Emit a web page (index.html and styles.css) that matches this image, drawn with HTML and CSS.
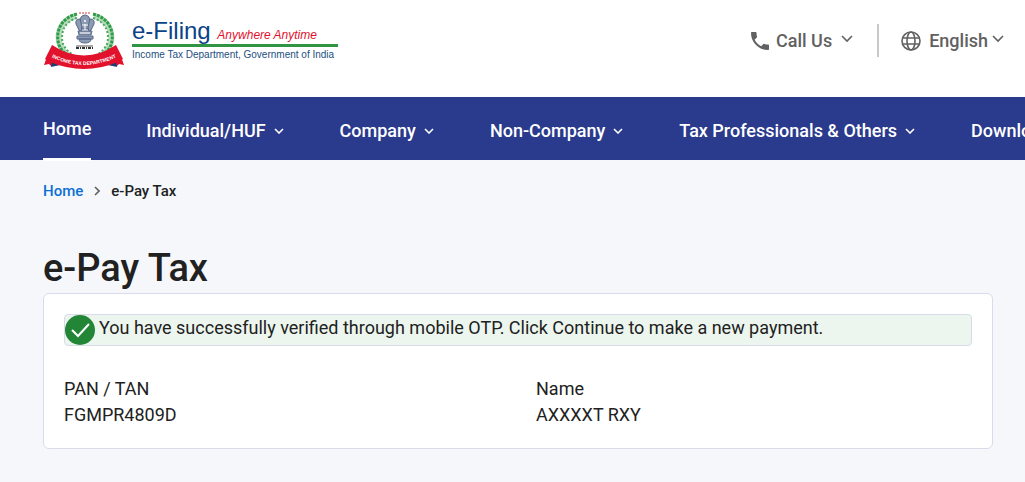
FILE: index.html
```html
<!DOCTYPE html>
<html lang="en">
<head>
    <meta charset="UTF-8">
    <meta name="viewport" content="width=device-width, initial-scale=1.0">
    <title>e-Pay Tax</title>
    <link rel="stylesheet" href="styles.css">
</head>
<body>
    <header class="top">
        <a class="brand" href="#">
            <svg class="emblem" width="82" height="58" viewBox="0 0 82 58" aria-hidden="true">
                <!-- wreath -->
                <path d="M33 4C18 8 13 21 17 33c2 5 6 9 11 12M51 4c15 4 20 17 16 29-2 5-6 9-11 12" fill="none" stroke="#b5dcbb" stroke-width="6"/>
                <path d="M34 2C17 6 12 21 16 33c2 5 6 9 11 12M50 2c17 4 22 19 18 31-2 5-6 9-11 12" fill="none" stroke="#2f9a48" stroke-width="3" stroke-dasharray="3 1"/>
                <path d="M34 6C21 10 17 21 20 32c2 4 5 8 9 10M50 6c13 4 17 15 14 26-2 4-5 8-9 10" fill="none" stroke="#4aa85e" stroke-width="2" stroke-dasharray="2 2"/>
                <path d="M36 1h12" stroke="#d8363c" stroke-width="1" stroke-dasharray="2 1"/>
                <!-- lion capital -->
                <g fill="#8d9bb2" stroke="#56698a" stroke-width="1">
                    <path d="M38 5q4-4 8 0l1 5-2 7h-6l-2-7z"/>
                    <path d="M37 7q-5 0-4 5l3 6 2 2 1-5zM47 7q5 0 4 5l-3 6-2 2-1-5z"/>
                    <path d="M35 19h14l-1 4H36zM34 24h16v3H34zM36 27h12q0 4-6 4t-6-4z"/>
                </g>
                <circle cx="42" cy="9" r="1" fill="#fff"/>
                <path d="M39 13h6M42 12v6M37 21h10" stroke="#fff" stroke-width="1"/>
                <path d="M33 36h17" stroke="#333" stroke-width="2" stroke-dasharray="3 1 1 1"/>
                <path d="M33 34h17" stroke="#555" stroke-width="1"/>
                <!-- ribbon -->
                <path d="M5 42L1 53l5-1 2 2 8-1zM77 42l4 11-5-1-2 2-8-1z" fill="#e2112c"/>
                <path d="M8 55l1-5 8 3zM74 55l-1-5-8 3z" fill="#193f79"/>
                <path d="M9 33q32 21 64 0l7 14-5 3q-34 14-68 0l-5-3z" fill="#e2112c"/>
                <path id="ribbon" d="M6 44q35 18 70 0" fill="none"/>
                <text class="ribbon-text"><textPath href="#ribbon" startOffset="50%" text-anchor="middle">INCOME TAX DEPARTMENT</textPath></text>
            </svg>
            <span class="brand-text">
                <span class="brand-name">e-Filing <em>Anywhere Anytime</em></span>
                <span class="brand-dept">Income Tax Department, Government of India</span>
            </span>
        </a>
        <div class="tools">
            <button class="tool" type="button">
                <svg width="24" height="24" viewBox="0 0 24 24" fill="currentColor" aria-hidden="true"><path d="M20 15.500c-1.200 0-2.400-.2-3.600-.6-.3-.1-.7 0-1 .2l-2.200 2.200c-2.800-1.400-5.100-3.800-6.600-6.600l2.200-2.200c.3-.3.400-.7.2-1C8.700 6.400 8.500 5.200 8.500 4c0-.6-.4-1-1-1H4c-.6 0-1 .4-1 1 0 9.400 7.600 17 17 17 .6 0 1-.4 1-1v-3.500c0-.6-.4-1-1-1z"/></svg>
                <span>Call Us</span>
                <svg class="arrow wide" width="12" height="8" viewBox="0 0 12 8" aria-hidden="true"><path d="M1 1l5 5 5-5"/></svg>
            </button>
            <button class="tool lang" type="button">
                <svg class="globe" width="20" height="20" viewBox="0 0 20 20" aria-hidden="true"><circle cx="10" cy="10" r="9"/><ellipse cx="10" cy="10" rx="4" ry="9"/><path d="M2 7h16M2 13h16"/></svg>
                <span>English</span>
                <svg class="arrow" width="12" height="8" viewBox="0 0 12 8" aria-hidden="true"><path d="M1 1l5 5 5-5"/></svg>
            </button>
        </div>
    </header>

    <nav class="menu">
        <a class="menu-item active" href="#">Home</a>
        <a class="menu-item" href="#">Individual/HUF <svg class="caret" width="10" height="6" viewBox="0 0 10 6"><path d="M1 1l4 4 4-4"/></svg></a>
        <a class="menu-item" href="#">Company <svg class="caret" width="10" height="6" viewBox="0 0 10 6"><path d="M1 1l4 4 4-4"/></svg></a>
        <a class="menu-item" href="#">Non-Company <svg class="caret" width="10" height="6" viewBox="0 0 10 6"><path d="M1 1l4 4 4-4"/></svg></a>
        <a class="menu-item" href="#">Tax Professionals &amp; Others <svg class="caret" width="10" height="6" viewBox="0 0 10 6"><path d="M1 1l4 4 4-4"/></svg></a>
        <a class="menu-item" href="#">Downloads</a>
    </nav>

    <main class="page">
        <div class="crumbs">
            <a href="#">Home</a>
            <svg width="6" height="10" viewBox="0 0 6 10" aria-hidden="true"><path d="M1 1l4 4-4 4"/></svg>
            <span>e-Pay Tax</span>
        </div>
        <h1>e-Pay Tax</h1>
        <section class="card">
            <div class="success">
                <svg width="30" height="30" viewBox="0 0 30 30" aria-hidden="true"><circle cx="15" cy="15" r="15" fill="#238636"/><path d="M7 15l6 6L24 9" fill="none" stroke="#fff" stroke-width="2"/></svg>
                <p>You have successfully verified through mobile OTP. Click Continue to make a new payment.</p>
            </div>
            <dl class="details">
                <div>
                    <dt>PAN / TAN</dt>
                    <dd>FGMPR4809D</dd>
                </div>
                <div>
                    <dt>Name</dt>
                    <dd>AXXXXT RXY</dd>
                </div>
            </dl>
        </section>
    </main>
</body>
</html>
```
FILE: styles.css
```css
*{
    padding: 0;
    margin: 0;
    box-sizing: border-box;
}
body{
    font-family: Roboto, sans-serif;
    font-size: 18px;
    line-height: 26px;
    color: #212121;
    background-color: #f5f7fb;
    overflow-x: hidden;
}
a{
    text-decoration: none;
}
svg{
    flex-shrink: 0;
}

/* header */
.top{
    display: flex;
    justify-content: space-between;
    align-items: flex-start;
    padding: 12px 21px 27px 43px;
    background-color: #fff;
}
.brand{
    display: flex;
    gap: 7px;
    white-space: nowrap;
}
.ribbon-text{
    font: bold 5px "Liberation Sans", Arial, sans-serif;
    fill: #fff;
}
.brand-text{
    display: flex;
    flex-direction: column;
    padding-top: 5px;
}
.brand-name{
    padding-right: 4px;
    font-family: "Liberation Sans", Arial, sans-serif;
    font-size: 24px;
    line-height: 27px;
    color: #0b4388;
    border-bottom: 3px solid #2f9443;
}
.brand-name em{
    font-size: 12px;
    line-height: 12px;
    color: #e2112c;
}
.brand-dept{
    padding-right: 4px;
    font-family: "Liberation Sans", Arial, sans-serif;
    font-size: 10px;
    line-height: 16px;
    color: #1b4f80;
}

/* call us / language */
.tools{
    display: flex;
    padding-top: 12px;
}
.tool{
    display: flex;
    align-items: center;
    gap: 4px;
    height: 33px;
    border: none;
    background: none;
    font: 500 18px Roboto, sans-serif;
    color: #616161;
    cursor: pointer;
}
.lang{
    margin-left: 24px;
    padding-left: 22px;
    border-left: 2px solid #c8c8c8;
}
.arrow, .caret, .globe, .crumbs svg{
    fill: none;
    stroke: currentColor;
    stroke-width: 1.6;
}
.arrow{
    margin-bottom: 4px;
}
.wide{
    margin-left: 5px;
}
.globe{
    margin-right: 4px;
}

/* navigation */
.menu{
    display: flex;
    gap: 55px;
    height: 63px;
    padding-left: 43px;
    background-color: #2a3a8c;
}
.menu-item{
    display: flex;
    align-items: center;
    padding-top: 4px;
    font-weight: 500;
    color: #fff;
    white-space: nowrap;
}
.active{
    height: 64px;
    padding-top: 2px;
    border-bottom: 3px solid #fff;
}
.caret{
    margin: 0 1px 0 8px;
}

/* content */
.page{
    padding: 18px 32px 32px 43px;
}
.crumbs{
    display: flex;
    align-items: center;
    gap: 11px;
    font-size: 15px;
    font-weight: 500;
}
.crumbs a{
    color: #0c6fd1;
}
.crumbs svg{
    color: #616161;
}
h1{
    margin-top: 40px;
    font-size: 38px;
    line-height: 49px;
    font-weight: 500;
}
.card{
    padding: 20px;
    background-color: #fff;
    border: 1px solid #d9dbea;
    border-radius: 6px;
}
.success{
    display: flex;
    gap: 4px;
    background-color: #ecf6ef;
    border: 1px solid #d9dbea;
    border-radius: 4px;
}
.details{
    display: grid;
    grid-template-columns: 1fr 1fr;
    column-gap: 36px;
    padding-top: 30px;
}
```
